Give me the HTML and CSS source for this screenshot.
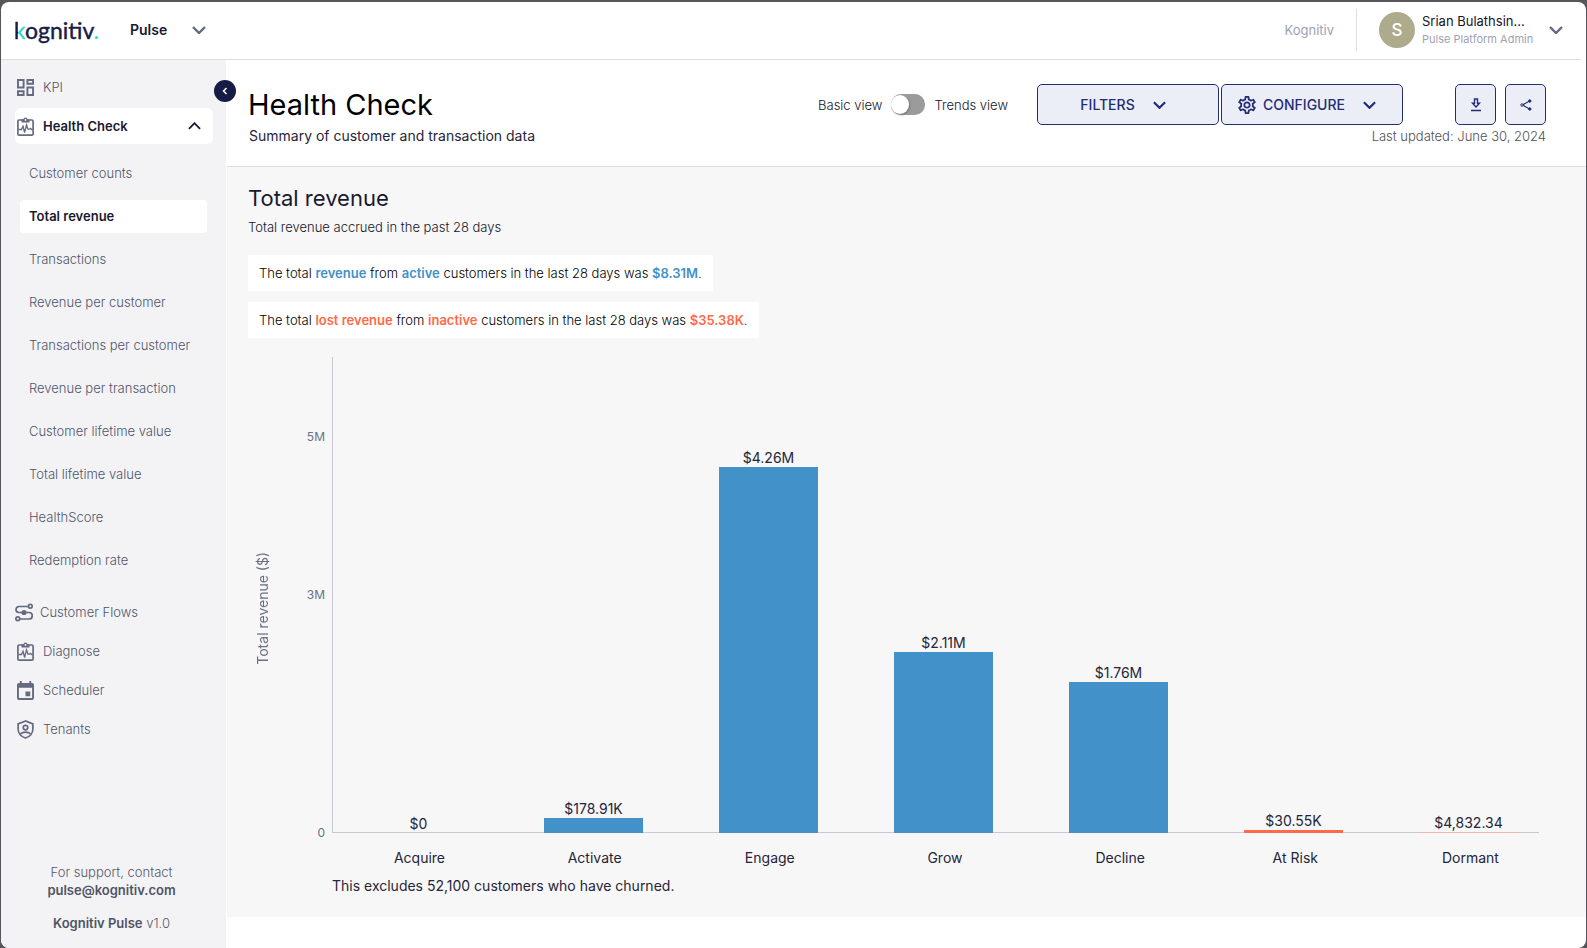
FILE: index.html
```
<!DOCTYPE html>
<html lang="en">
<head>
<meta charset="utf-8">
<meta name="viewport" content="width=device-width, initial-scale=1">
<title>Health Check - Kognitiv Pulse</title>
<link rel="stylesheet" href="styles.css">
</head>
<body>
<svg class="defs" aria-hidden="true">
  <symbol id="chevron-down" viewBox="0 0 14 8"><path d="M1 1l6 6 6-6" fill="none" stroke="currentColor" stroke-width="2.4"/></symbol>
  <symbol id="chevron-up" viewBox="0 0 14 8"><path d="M1 7l6-6 6 6" fill="none" stroke="currentColor" stroke-width="2"/></symbol>
  <symbol id="clipboard" viewBox="0 0 17 19"><rect x=".9" y="3" width="15.200" height="15.100" rx="1.200" fill="none" stroke="currentColor" stroke-width="1.700"/><path d="M4.500 5.500V2.200h1.800a2.300 2.300 0 0 1 4.400 0h1.800v3.300z" fill="currentColor"/><circle cx="8.500" cy="2.900" r=".9" fill="#fff"/><path d="M1.500 12.500h3L6 9.200 7.600 15.500 9.500 7.800l1.500 4.400h1.500l1-.9 1.200 1.200h1" fill="none" stroke="currentColor" stroke-width="1.300"/></symbol>
</svg>
<div class="window">
  <header class="topbar">
    <a class="logo" href="#" aria-label="kognitiv."><span class="logo-k">k</span>ognitiv<span class="logo-dot">.</span></a>
    <button class="product" type="button">Pulse <svg class="chev"><use href="#chevron-down"/></svg></button>
    <span class="tenant">Kognitiv</span>
    <button class="account" type="button">
      <span class="avatar">S</span>
      <span class="who"><span class="who-name">Srian Bulathsin...</span><span class="who-role">Pulse Platform Admin</span></span>
      <svg class="chev"><use href="#chevron-down"/></svg>
    </button>
  </header>
  <div class="body">
    <aside class="sidebar">
      <button class="collapse" type="button" aria-label="Collapse menu"><svg width="6" height="8" viewBox="0 0 6 8"><path d="M4.500 1L1.500 4l3 3" fill="none" stroke="currentColor" stroke-width="1.500"/></svg></button>
      <nav class="nav">
        <a class="item" href="#"><svg class="icon" viewBox="3 3 18 18"><path fill="currentColor" d="M19 5v2h-4V5h4M9 5v6H5V5h4m10 8v6h-4v-6h4M9 17v2H5v-2h4M21 3h-8v6h8V3zM11 3H3v10h8V3zm10 8h-8v10h8V11zm-10 4H3v6h8v-6z"/></svg>KPI</a>
        <a class="item open" href="#"><svg class="icon tall"><use href="#clipboard"/></svg>Health Check<svg class="caret"><use href="#chevron-up"/></svg></a>
        <div class="sub">
          <a href="#">Customer counts</a>
          <a class="current" href="#">Total revenue</a>
          <a href="#">Transactions</a>
          <a href="#">Revenue per customer</a>
          <a href="#">Transactions per customer</a>
          <a href="#">Revenue per transaction</a>
          <a href="#">Customer lifetime value</a>
          <a href="#">Total lifetime value</a>
          <a href="#">HealthScore</a>
          <a href="#">Redemption rate</a>
        </div>
        <a class="item flows" href="#"><svg class="icon tall" viewBox="0 0 18 18" fill="none" stroke="currentColor" stroke-width="1.700"><path d="M13 3H4a3 3 0 0 0 0 6h10a3 3 0 0 1 0 6.500H5"/><circle cx="15.300" cy="2.800" r="1.900"/><circle cx="2.800" cy="15.300" r="1.900"/><circle cx="9" cy="9" r="2.600" fill="currentColor" stroke="none"/></svg>Customer Flows</a>
        <a class="item" href="#"><svg class="icon tall"><use href="#clipboard"/></svg>Diagnose</a>
        <a class="item" href="#"><svg class="icon tall" viewBox="3 1 18 20"><path fill="currentColor" d="M17 12h-5v5h5v-5zM16 1v2H8V1H6v2H5c-1.110 0-1.990.9-1.990 2L3 19a2 2 0 0 0 2 2h14c1.100 0 2-.9 2-2V5c0-1.100-.9-2-2-2h-1V1h-2zm3 18H5V8h14v11z"/></svg>Scheduler</a>
        <a class="item" href="#"><svg class="icon tall" viewBox="0 0 18 20" fill="none" stroke="currentColor" stroke-width="1.800"><path d="M9 1L1.200 4v5.500C1.200 14 4.500 17.800 9 19c4.500-1.200 7.800-5 7.800-9.500V4z"/><circle cx="9" cy="8" r="2.400"/><path d="M3.500 14.800c1.500-1.600 3.500-2.100 5.500-2.100s4 .5 5.500 2.100"/></svg>Tenants</a>
      </nav>
      <footer class="support">
        <p>For support, contact<br><a href="mailto:pulse@kognitiv.com">pulse@kognitiv.com</a></p>
        <p><b>Kognitiv Pulse</b> v1.0</p>
      </footer>
    </aside>
    <main class="main">
      <section class="head">
        <div class="head-row">
          <h1>Health Check</h1>
          <label class="view"><span>Basic view</span><input type="checkbox" role="switch" class="switch"><span>Trends view</span></label>
          <div class="menus">
            <button class="btn wide" type="button">FILTERS <svg class="chev small"><use href="#chevron-down"/></svg></button>
            <button class="btn wide" type="button"><svg class="gear" viewBox="2 2 20 20"><path fill="currentColor" d="M19.430 12.980c.04-.32.07-.64.07-.98 0-.34-.03-.66-.07-.98l2.110-1.650c.19-.15.24-.42.12-.64l-2-3.460c-.09-.16-.26-.25-.44-.25-.06 0-.12.010-.17.030l-2.490 1c-.52-.4-1.080-.73-1.690-.98l-.38-2.650C14.460 2.180 14.250 2 14 2h-4c-.25 0-.46.18-.49.42l-.38 2.650c-.61.25-1.170.59-1.690.98l-2.490-1c-.06-.02-.12-.03-.18-.03-.17 0-.34.09-.43.25l-2 3.460c-.13.22-.07.49.12.64l2.110 1.650c-.04.32-.07.65-.07.98 0 .33.03.66.07.98l-2.110 1.650c-.19.15-.24.42-.12.64l2 3.460c.09.16.26.25.44.25.06 0 .12-.01.17-.03l2.490-1c.52.4 1.080.73 1.690.98l.38 2.650c.03.24.24.42.49.42h4c.25 0 .46-.18.49-.42l.38-2.650c.61-.25 1.170-.59 1.690-.98l2.490 1c.06.02.12.03.18.03.17 0 .34-.09.43-.25l2-3.460c.12-.22.07-.49-.12-.64l-2.110-1.650zm-1.980-1.710c.04.31.05.52.05.73 0 .21-.02.43-.05.73l-.14 1.130.89.7 1.080.84-.7 1.210-1.270-.51-1.040-.42-.9.68c-.43.32-.84.56-1.250.73l-1.060.43-.16 1.130-.2 1.350h-1.400l-.19-1.350-.16-1.130-1.060-.43c-.43-.18-.83-.41-1.230-.71l-.91-.7-1.060.43-1.270.51-.7-1.210 1.080-.84.89-.7-.14-1.130c-.03-.31-.05-.54-.05-.74s.02-.43.05-.73l.14-1.130-.89-.7-1.080-.84.7-1.210 1.270.51 1.040.42.9-.68c.43-.32.84-.56 1.250-.73l1.060-.43.16-1.130.2-1.350h1.390l.19 1.350.16 1.130 1.060.43c.43.18.83.41 1.230.71l.91.7 1.060-.43 1.270-.51.7 1.210-1.070.85-.89.7.14 1.130zM12 8c-2.210 0-4 1.790-4 4s1.790 4 4 4 4-1.790 4-4-1.790-4-4-4zm0 6c-1.100 0-2-.9-2-2s.9-2 2-2 2 .9 2 2-.9 2-2 2z"/></svg>CONFIGURE <svg class="chev small"><use href="#chevron-down"/></svg></button>
          </div>
          <div class="tools">
            <button class="btn square" type="button" aria-label="Download"><svg width="12" height="14" viewBox="0 0 12 14"><path d="M4.500 1h3v4.200h2L6 9 2.500 5.200h2z" fill="none" stroke="currentColor" stroke-width="1.400"/><path d="M1 12.500h10" stroke="currentColor" stroke-width="1.500"/></svg></button>
            <button class="btn square" type="button" aria-label="Share"><svg width="12" height="12" viewBox="0 0 12 12" fill="none" stroke="currentColor"><path d="M9.500 2L2.500 6l7 4" stroke-width="1.200"/><circle cx="9.800" cy="2" r="1.200" fill="currentColor"/><circle cx="2" cy="6" r="1.200" fill="#eceef7"/><circle cx="9.800" cy="10" r="1.200" fill="currentColor"/></svg></button>
          </div>
        </div>
        <div class="head-sub"><p>Summary of customer and transaction data</p><p class="updated">Last updated: June 30, 2024</p></div>
      </section>
      <section class="content">
        <h2>Total revenue</h2>
        <p class="lead">Total revenue accrued in the past 28 days</p>
        <p class="note">The total <b>revenue</b> from <b>active</b> customers in the last 28 days was <b>$8.31M</b>.</p>
        <p class="note lost">The total <b>lost revenue</b> from <b>inactive</b> customers in the last 28 days was <b>$35.38K</b>.</p>
        <div class="chart">
          <div class="axis-title">Total revenue ($)</div>
          <div class="ticks"><span>5M</span><span>3M</span><span>0</span></div>
          <div class="plot">
            <div class="col"><span>$0</span></div>
            <div class="col"><span>$178.91K</span><i class="bar" style="height:3.230%"></i></div>
            <div class="col"><span>$4.26M</span><i class="bar" style="height:76.900%"></i></div>
            <div class="col"><span>$2.11M</span><i class="bar" style="height:38.100%"></i></div>
            <div class="col"><span>$1.76M</span><i class="bar" style="height:31.800%"></i></div>
            <div class="col"><span>$30.55K</span><i class="bar risk" style="height:0.550%"></i></div>
            <div class="col"><span>$4,832.34</span><i class="bar risk faint" style="height:0.090%"></i></div>
          </div>
          <div class="names"><span>Acquire</span><span>Activate</span><span>Engage</span><span>Grow</span><span>Decline</span><span>At Risk</span><span>Dormant</span></div>
          <p class="foot">This excludes 52,100 customers who have churned.</p>
        </div>
      </section>
    </main>
  </div>
</div>
</body>
</html>
```
FILE: styles.css
```
* { box-sizing: border-box; }
body {
  margin: 0;
  padding: 2px 1px 0;
  background: #55555a;
  font-family: Inter, "Liberation Sans", sans-serif;
  font-size: 13px;
  font-weight: 300;
  line-height: 18px;
  color: #15152a;
}
h1, h2, p { margin: 0; font-weight: inherit; }
h1, h2 { font-weight: 400; }
a { color: inherit; text-decoration: none; }
button { font: inherit; color: inherit; background: none; border: 0; padding: 0; cursor: pointer; }
svg { flex: none; }
.defs { position: absolute; width: 0; height: 0; }

.window {
  display: flex;
  flex-direction: column;
  min-height: calc(100vh - 2px);
  background: #fff;
  border-radius: 8px;
  overflow: hidden;
}
.topbar {
  display: flex;
  align-items: center;
  height: 58px;
  margin-right: 5px;
  padding: 0 18px 2px 13px;
  border-bottom: 1px solid #dddde1;
}
.logo {
  width: 116px;
  font-family: Lato, sans-serif;
  font-size: 23px;
  font-weight: 400;
  line-height: 30px;
  color: #161c45;
  -webkit-text-stroke: 0.4px #161c45;
}
.logo-k {
  background: linear-gradient(90deg, #161c45 4px, #2bd9cb 4px);
  -webkit-background-clip: text;
  background-clip: text;
  color: transparent;
  -webkit-text-stroke: 0.4px transparent;
}
.logo-dot { color: #2bd9cb; -webkit-text-stroke: 0; }
.chev { width: 14px; height: 8px; color: #646a80; }
.product { display: flex; align-items: center; gap: 25px; font-size: 14px; font-weight: 600; color: #1a1a2e; }
.tenant { margin-left: auto; padding-right: 22px; font-weight: 400; color: #a0a1b3; }
.account {
  display: flex;
  align-items: center;
  height: 42px;
  padding-left: 22px;
  border-left: 1px solid #dddde1;
  font-weight: 400;
  text-align: left;
}
.avatar {
  width: 36px;
  height: 36px;
  margin-right: 7px;
  border-radius: 50%;
  background: #aeaa8c;
  color: #fff;
  font-size: 17px;
  font-weight: 500;
  line-height: 36px;
  text-align: center;
}
.who { display: flex; flex-direction: column; width: 127px; }
.who-role { font-size: 11px; color: #a0a1b3; }

.body { display: flex; flex: 1; }
.sidebar {
  position: relative;
  display: flex;
  flex-direction: column;
  flex: none;
  width: 225px;
  padding: 9px 13px 16px 14px;
  background: #f3f3f5;
  color: #50556b;
}
.collapse {
  position: absolute;
  top: 20px;
  right: -10px;
  display: grid;
  place-items: center;
  width: 22px;
  height: 22px;
  border-radius: 50%;
  background: #161c45;
  color: #fff;
}
.nav { display: flex; flex-direction: column; gap: 3px; }
.item { display: flex; align-items: center; gap: 9px; height: 36px; padding: 0 12px 0 2px; border-radius: 6px; }
.icon { width: 17px; height: 17px; color: #646a80; }
.icon.tall { height: 19px; }
.open { background: #fff; color: #1a1a2e; font-weight: 600; }
.caret { width: 13px; height: 8px; margin-left: auto; }
.flows { padding-left: 0; gap: 7px; }
.flows .icon { width: 18px; }
.sub { display: flex; flex-direction: column; gap: 10px; padding: 10px 6px 14px 5px; }
.sub a { padding: 7px 9px 8px; border-radius: 4px; }
.sub .current { background: #fff; color: #1a1a2e; font-weight: 600; }
.support { display: flex; flex-direction: column; gap: 15px; margin-top: auto; padding-right: 5px; text-align: center; color: #55576a; }
.support a, .support b { font-weight: 600; color: #515365; }

.main { flex: 1; min-width: 0; padding-left: 1px; }
.head { height: 107px; padding: 23px 40px 0 21px; border-bottom: 1px solid #dddde1; }
.head-row { display: flex; align-items: center; }
h1 { margin-right: auto; font-size: 29px; line-height: 43px; color: #000; }
.view { display: flex; align-items: center; gap: 9px; margin-right: 29px; }
.switch {
  appearance: none;
  display: flex;
  align-items: center;
  width: 34px;
  height: 21px;
  margin: 0;
  border-radius: 10px;
  background: #9b9b9b;
}
.switch::before {
  content: "";
  width: 18px;
  height: 19px;
  border-radius: 50%;
  background: #fff;
  box-shadow: 1px 1px 2px #777;
}
.menus { display: flex; gap: 2px; margin-right: 52px; }
.tools { display: flex; gap: 9px; }
.btn {
  display: flex;
  align-items: center;
  justify-content: center;
  height: 41px;
  border: 1px solid #232d75;
  border-radius: 5px;
  background: #eceef7;
  color: #232d75;
  font-size: 14px;
  font-weight: 500;
}
.wide { width: 182px; gap: 18px; padding-right: 10px; }
.square { width: 41px; }
.chev.small { width: 13px; color: #232d75; }
.gear { width: 18px; height: 18px; margin-right: -11px; }
.head-sub { display: flex; justify-content: space-between; padding-left: 1px; font-size: 14px; font-weight: 400; line-height: 20px; color: #25253a; }
.updated { font-size: 13px; font-weight: 300; color: #505056; }

.content { display: flex; flex-direction: column; align-items: flex-start; padding: 16px 47px 22px 21px; background: #f7f7f7; }
h2 { font-size: 22px; line-height: 30px; color: #1a1a2e; }
.lead { margin: 5px 0 19px; }
.note { margin-bottom: 11px; padding: 9px 11px; background: #fff; color: #000; }
.note b { font-weight: 600; color: #4391c9; }
.note.lost b { color: #ff6a4a; }
.chart {
  display: grid;
  grid-template-columns: 32px 52px 1fr;
  grid-template-rows: 476px auto auto;
  align-self: stretch;
  margin-top: 8px;
  font-size: 14px;
  font-weight: 400;
  color: #25253a;
}
.axis-title { writing-mode: vertical-rl; transform: rotate(180deg); align-self: center; margin: 20px 0 0 6px; padding-bottom: 6px; justify-self: start; color: #6b7084; }
.ticks { display: grid; grid-template-rows: 80fr 158fr 238fr; padding-right: 7px; font-size: 12px; color: #6b7084; text-align: right; }
.ticks span { align-self: end; margin-bottom: -9px; }
.plot {
  display: flex;
  justify-content: space-between;
  padding: 0 21px 0 36px;
  border-left: 1px solid #c9c9d6;
  background: linear-gradient(#c9c9d6, #c9c9d6) left bottom / 100% 1px no-repeat;
}
.col { display: flex; flex-direction: column; justify-content: flex-end; width: 99px; text-align: center; }
.bar { display: block; flex: none; min-height: 1px; background: #4391c9; }
.risk { background: #ff6a4a; }
.faint { background: #f3b5aa; }
.names { grid-column: 3; display: flex; justify-content: space-between; padding: 16px 19px 0 38px; }
.names span { width: 99px; text-align: center; }
.foot { grid-column: 3; margin-top: 10px; }
```
